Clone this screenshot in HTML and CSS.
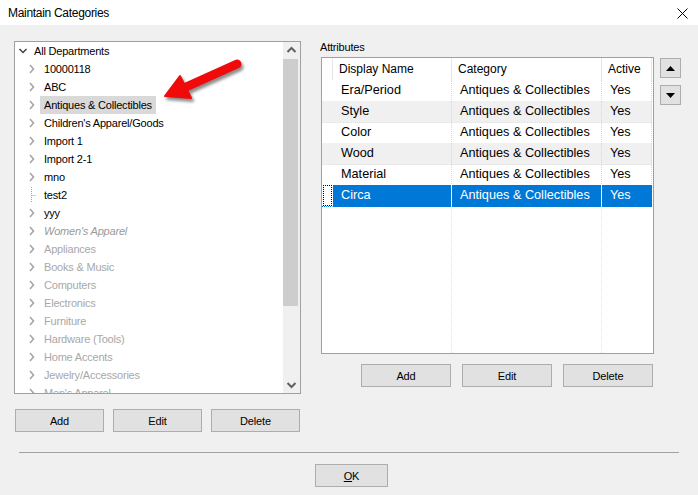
FILE: index.html
```html
<!DOCTYPE html>
<html>
<head>
<meta charset="utf-8">
<link rel="stylesheet" href="styles.css">
</head>
<body>
<div class="window">
  <div class="titlebar">
    <span class="title">Maintain Categories</span>
    <svg class="close" width="11" height="11" viewBox="0 0 11 11"><path d="M0.5 0.5 L10.5 10.5 M10.5 0.5 L0.5 10.5" stroke="#000" stroke-width="1"/></svg>
  </div>

  <div class="main">
    <div class="left">
      <div class="tree">
        <div class="tree-list">
          <div class="node lvl0"><span class="tw"><svg width="12" height="18"><path d="M1.5 7 L5 10.5 L8.5 7" fill="none" stroke="#404040" stroke-width="1.5"/></svg></span><span class="lbl">All Departments</span></div>
          <div class="node lvl1"><span class="tw"><svg width="12" height="18"><path d="M2 5 L5.5 9 L2 13" fill="none" stroke="#a6a6a6" stroke-width="1.6"/></svg></span><span class="lbl">10000118</span></div>
          <div class="node lvl1"><span class="tw"><svg width="12" height="18"><path d="M2 5 L5.5 9 L2 13" fill="none" stroke="#a6a6a6" stroke-width="1.6"/></svg></span><span class="lbl">ABC</span></div>
          <div class="node lvl1"><span class="tw"><svg width="12" height="18"><path d="M2 5 L5.5 9 L2 13" fill="none" stroke="#a6a6a6" stroke-width="1.6"/></svg></span><span class="lbl sel">Antiques &amp; Collectibles</span></div>
          <div class="node lvl1"><span class="tw"><svg width="12" height="18"><path d="M2 5 L5.5 9 L2 13" fill="none" stroke="#a6a6a6" stroke-width="1.6"/></svg></span><span class="lbl">Children's Apparel/Goods</span></div>
          <div class="node lvl1"><span class="tw"><svg width="12" height="18"><path d="M2 5 L5.5 9 L2 13" fill="none" stroke="#a6a6a6" stroke-width="1.6"/></svg></span><span class="lbl">Import 1</span></div>
          <div class="node lvl1"><span class="tw"><svg width="12" height="18"><path d="M2 5 L5.5 9 L2 13" fill="none" stroke="#a6a6a6" stroke-width="1.6"/></svg></span><span class="lbl">Import 2-1</span></div>
          <div class="node lvl1"><span class="tw"><svg width="12" height="18"><path d="M2 5 L5.5 9 L2 13" fill="none" stroke="#a6a6a6" stroke-width="1.6"/></svg></span><span class="lbl">mno</span></div>
          <div class="node lvl1"><span class="tw"><svg width="12" height="18"><path d="M3.5 1 V17 M3.5 9.5 H8" fill="none" stroke="#a0a0a0" stroke-width="1" stroke-dasharray="1 1"/></svg></span><span class="lbl">test2</span></div>
          <div class="node lvl1"><span class="tw"><svg width="12" height="18"><path d="M2 5 L5.5 9 L2 13" fill="none" stroke="#a6a6a6" stroke-width="1.6"/></svg></span><span class="lbl">yyy</span></div>
          <div class="node lvl1 dim"><span class="tw"><svg width="12" height="18"><path d="M2 5 L5.5 9 L2 13" fill="none" stroke="#a6a6a6" stroke-width="1.6"/></svg></span><span class="lbl ital">Women's Apparel</span></div>
          <div class="node lvl1 dim"><span class="tw"><svg width="12" height="18"><path d="M2 5 L5.5 9 L2 13" fill="none" stroke="#a6a6a6" stroke-width="1.6"/></svg></span><span class="lbl">Appliances</span></div>
          <div class="node lvl1 dim"><span class="tw"><svg width="12" height="18"><path d="M2 5 L5.5 9 L2 13" fill="none" stroke="#a6a6a6" stroke-width="1.6"/></svg></span><span class="lbl">Books &amp; Music</span></div>
          <div class="node lvl1 dim"><span class="tw"><svg width="12" height="18"><path d="M2 5 L5.5 9 L2 13" fill="none" stroke="#a6a6a6" stroke-width="1.6"/></svg></span><span class="lbl">Computers</span></div>
          <div class="node lvl1 dim"><span class="tw"><svg width="12" height="18"><path d="M2 5 L5.5 9 L2 13" fill="none" stroke="#a6a6a6" stroke-width="1.6"/></svg></span><span class="lbl">Electronics</span></div>
          <div class="node lvl1 dim"><span class="tw"><svg width="12" height="18"><path d="M2 5 L5.5 9 L2 13" fill="none" stroke="#a6a6a6" stroke-width="1.6"/></svg></span><span class="lbl">Furniture</span></div>
          <div class="node lvl1 dim"><span class="tw"><svg width="12" height="18"><path d="M2 5 L5.5 9 L2 13" fill="none" stroke="#a6a6a6" stroke-width="1.6"/></svg></span><span class="lbl">Hardware (Tools)</span></div>
          <div class="node lvl1 dim"><span class="tw"><svg width="12" height="18"><path d="M2 5 L5.5 9 L2 13" fill="none" stroke="#a6a6a6" stroke-width="1.6"/></svg></span><span class="lbl">Home Accents</span></div>
          <div class="node lvl1 dim"><span class="tw"><svg width="12" height="18"><path d="M2 5 L5.5 9 L2 13" fill="none" stroke="#a6a6a6" stroke-width="1.6"/></svg></span><span class="lbl">Jewelry/Accessories</span></div>
          <div class="node lvl1 dim"><span class="tw"><svg width="12" height="18"><path d="M2 5 L5.5 9 L2 13" fill="none" stroke="#a6a6a6" stroke-width="1.6"/></svg></span><span class="lbl">Men's Apparel</span></div>
        </div>
        <div class="vscroll">
          <div class="sbtn"><svg width="17" height="17"><path d="M4.5 10 L8.5 6 L12.5 10" fill="none" stroke="#606060" stroke-width="2"/></svg></div>
          <div class="strack"><div class="thumb"></div></div>
          <div class="sbtn"><svg width="17" height="17"><path d="M4.5 7 L8.5 11 L12.5 7" fill="none" stroke="#606060" stroke-width="2"/></svg></div>
        </div>
        <svg class="callout" width="100" height="62" viewBox="0 0 100 62">
          <path d="M87 13 L36 36" stroke="#f00a0a" stroke-width="9" stroke-linecap="round" fill="none"/>
          <polygon points="15,45 30,25 41,47" fill="#f00a0a" stroke="#f00a0a" stroke-width="2" stroke-linejoin="round"/>
        </svg>
      </div>
      <div class="btnrow left-btns">
        <button class="btn">Add</button>
        <button class="btn">Edit</button>
        <button class="btn">Delete</button>
      </div>
    </div>

    <div class="right">
      <div class="attr-label">Attributes</div>
      <div class="attr-wrap">
        <div class="grid">
          <div class="ghead">
            <div class="hc c0"></div>
            <div class="hc">Display Name</div>
            <div class="hc">Category</div>
            <div class="hc">Active</div>
          </div>
          <div class="grow"><div class="gc c0"></div><div class="gc">Era/Period</div><div class="gc">Antiques &amp; Collectibles</div><div class="gc">Yes</div></div>
          <div class="grow alt"><div class="gc c0"></div><div class="gc">Style</div><div class="gc">Antiques &amp; Collectibles</div><div class="gc">Yes</div></div>
          <div class="grow"><div class="gc c0"></div><div class="gc">Color</div><div class="gc">Antiques &amp; Collectibles</div><div class="gc">Yes</div></div>
          <div class="grow alt"><div class="gc c0"></div><div class="gc">Wood</div><div class="gc">Antiques &amp; Collectibles</div><div class="gc">Yes</div></div>
          <div class="grow"><div class="gc c0"></div><div class="gc">Material</div><div class="gc">Antiques &amp; Collectibles</div><div class="gc">Yes</div></div>
          <div class="grow selrow"><div class="gc c0"><span class="focus"></span></div><div class="gc">Circa</div><div class="gc">Antiques &amp; Collectibles</div><div class="gc">Yes</div></div>
          <div class="gfill"><div class="fc c0"></div><div class="fc"></div><div class="fc"></div><div class="fc"></div></div>
        </div>
        <div class="btnrow right-btns">
          <button class="btn">Add</button>
          <button class="btn">Edit</button>
          <button class="btn">Delete</button>
        </div>
      </div>
    </div>

    <div class="side">
      <button class="mini"><svg width="9" height="5"><path d="M0 5 L4.5 0 L9 5 Z" fill="#000"/></svg></button>
      <button class="mini"><svg width="9" height="5"><path d="M0 0 L9 0 L4.5 5 Z" fill="#000"/></svg></button>
    </div>
  </div>

  <div class="sep"></div>
  <div class="footer">
    <button class="btn ok"><u>O</u>K</button>
  </div>
</div>
</body>
</html>
```

FILE: styles.css
```css
* { box-sizing: border-box; }
html, body { margin: 0; padding: 0; }
body {
  width: 698px;
  height: 495px;
  overflow: hidden;
  background: #f0f0f0;
  font-family: "Liberation Sans", Arial, sans-serif;
  font-size: 11px;
  letter-spacing: -0.2px;
  color: #000;
}
.window { width: 698px; height: 495px; display: flex; flex-direction: column; }

.titlebar {
  height: 25px;
  background: #fff;
  display: flex;
  align-items: center;
  justify-content: space-between;
  padding: 0 10px 0 8px;
  font-size: 12px;
  letter-spacing: -0.3px;
}
.close { display: block; margin-top: 1px; }

.main {
  display: flex;
  padding: 16px 0 0 14px;
}
.left { width: 287px; display: flex; flex-direction: column; }

.tree {
  position: relative;
  height: 353px;
  border: 1px solid #a0a0a0;
  background: #fff;
  display: flex;
  overflow: hidden;
}
.tree-list { flex: 1; overflow: hidden; }
.node {
  height: 18px;
  display: flex;
  align-items: center;
  white-space: nowrap;
}
.node.lvl0 { padding-left: 3px; }
.node.lvl1 { padding-left: 13px; }
.tw { width: 12px; height: 18px; display: block; flex: none; }
.tw svg { display: block; }
.lbl { padding: 0 4px; line-height: 18px; height: 18px; }
.lbl.sel { background: #d9d9d9; }
.dim .lbl { color: #a8a8a8; }
.lbl.ital { font-style: italic; color: #9a9a9a; }

.vscroll {
  width: 17px;
  flex: none;
  background: #f0f0f0;
  display: flex;
  flex-direction: column;
}
.sbtn { height: 17px; flex: none; }
.sbtn svg { display: block; }
.strack { flex: 1; padding: 0 2px 0 0; }
.thumb { height: 247px; background: #cdcdcd; }

.callout {
  position: absolute;
  left: 135px;
  top: 9px;
  filter: drop-shadow(2px 3px 1.5px rgba(0,0,0,0.45));
}

.btnrow { display: flex; }
.btn {
  height: 23px;
  width: 90px;
  background: #e1e1e1;
  border: 1px solid #adadad;
  font-family: inherit;
  font-size: 11px;
  letter-spacing: -0.15px;
  color: #000;
  padding: 0;
}
.left-btns { margin-top: 15px; padding-left: 1px; gap: 9px; }
.left-btns .btn { width: 89px; }

.right { margin-left: 19px; width: 334px; display: flex; flex-direction: column; }
.attr-label { height: 16px; line-height: 13px; padding-left: 0; }
.attr-wrap { display: flex; flex-direction: column; }
.grid {
  margin-left: 1px;
  height: 297px;
  border: 1px solid #a0a0a0;
  background: #fff;
  display: flex;
  flex-direction: column;
  font-size: 12.7px;
  letter-spacing: 0;
}
.ghead, .grow, .gfill {
  display: grid;
  grid-template-columns: 11px 119px 150px 50px;
}
.ghead { height: 22px; font-size: 12px; }
.hc {
  line-height: 22px;
  padding-left: 6px;
  border-right: 1px solid #e5e5e5;
  white-space: nowrap;
}
.hc.c0 { padding: 0; }
.grow { height: 21px; }
.gc {
  line-height: 21px;
  padding-left: 8px;
  white-space: nowrap;
  border-right: 1px dotted #d8d8d8;
  border-bottom: 1px dotted #e4e4e4;
}
.gc.c0 { padding: 0; border-right: none; }
.grow.alt .gc { background: #f0f0f0; }
.grow.selrow .gc { background: #0078d7; color: #fff; border-right: 1px solid #fff; border-bottom-color: #0078d7; }
.grow.selrow .gc:last-child { border-right-color: #0078d7; }
.grow.selrow .gc.c0 { background: #fff; }
.focus {
  display: block;
  margin: 0 0 0 1px;
  width: 9px;
  height: 21px;
  border: 1px dotted #000;
}
.gfill { flex: 1; }
.fc { border-right: 1px dotted #e4e4e4; }
.fc.c0 { border-right: none; }
.fc:last-child { border-right: none; }

.right-btns { margin-top: 10px; justify-content: flex-end; gap: 11px; padding-right: 1px; }

.side {
  margin-left: 6px;
  padding-top: 17px;
  display: flex;
  flex-direction: column;
  gap: 7px;
}
.mini {
  width: 21px;
  height: 20px;
  background: #e1e1e1;
  border: 1px solid #adadad;
  padding: 0;
  display: flex;
  align-items: center;
  justify-content: center;
}
.mini svg { display: block; }

.sep {
  margin: 20px 19px 0 19px;
  height: 1px;
  background: #a0a0a0;
}
.footer {
  display: flex;
  justify-content: center;
  padding-left: 5px;
  margin-top: 11px;
}
.btn.ok { width: 73px; }
```
